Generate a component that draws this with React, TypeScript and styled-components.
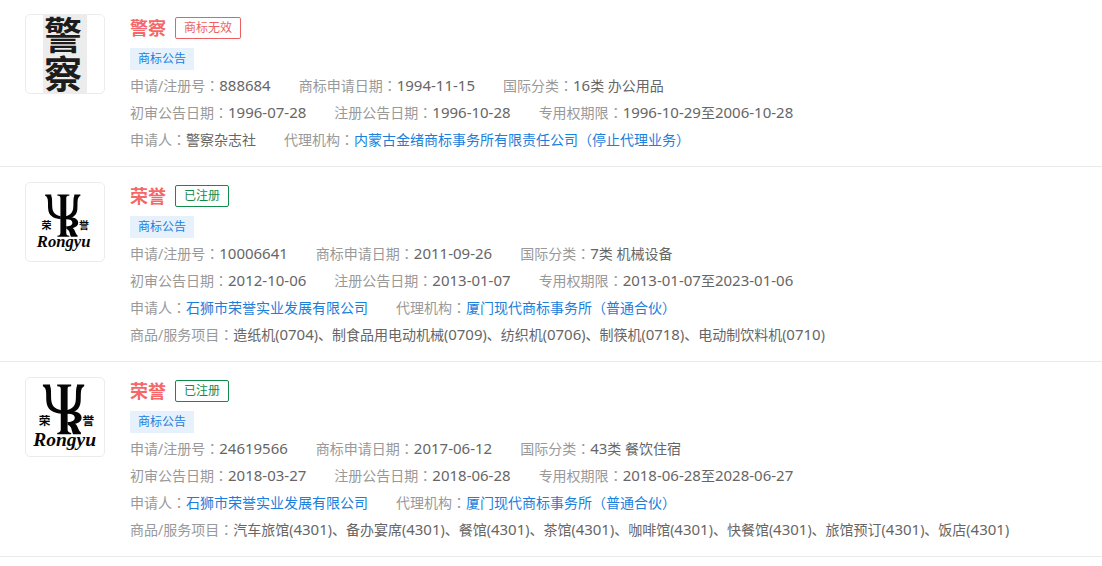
import React from "react";
import styled, { createGlobalStyle } from "styled-components";

const GlobalStyle = createGlobalStyle`
  * { box-sizing: border-box; }
  body {
    margin: 0;
    background: #fff;
    color: #666;
    font-family: "Noto Sans", "Noto Sans CJK SC", sans-serif;
    font-size: 14px;
  }
`;

const List = styled.ul`
  margin: 0;
  padding: 0;
  list-style: none;
`;

const Item = styled.li`
  display: flex;
  align-items: flex-start;
  gap: 25px;
  padding: 15px 25px 13px;
  border-bottom: 1px solid #e9e9e9;
  &:first-child { padding-top: 14px; }
`;

const Thumb = styled.div`
  flex: none;
  width: 80px;
  height: 80px;
  border: 1px solid #ececec;
  border-radius: 5px;
  overflow: hidden;
  svg { display: block; width: 100%; height: 100%; }
`;

const Body = styled.div`
  flex: 1;
  min-width: 0;
`;

const Heading = styled.div`
  display: flex;
  align-items: center;
  gap: 9px;
  height: 28px;
`;

const Name = styled.h2`
  margin: 0;
  font-size: 18px;
  line-height: 28px;
  font-weight: 700;
  color: #f56768;
`;

const Status = styled.span<{ $valid: boolean }>`
  padding: 0 8px;
  border: 1px solid currentColor;
  border-radius: 2px;
  font-size: 12px;
  line-height: 20px;
  color: ${(p) => (p.$valid ? "#128c4a" : "#ee5f62")};
`;

const Tag = styled.div`
  width: fit-content;
  margin: 6px 0 2px;
  padding: 0 8px;
  background: #e6f1fc;
  color: #1a80dc;
  font-size: 12px;
  line-height: 22px;
`;

const Fields = styled.dl`
  margin: 0;
`;

const Row = styled.div`
  display: flex;
  flex-wrap: wrap;
  column-gap: 28px;
`;

const Field = styled.div`
  display: flex;
  line-height: 27px;
`;

const Label = styled.dt`
  flex: none;
  color: #999;
`;

const Value = styled.dd`
  margin: 0;
`;

const Link = styled.a`
  color: #1a80dc;
  text-decoration: none;
  &:hover { text-decoration: underline; }
`;

const Digits = styled.span`
  font-size: 15px;
  line-height: 1;
`;

/* Full-width colons and brackets centred in their cell */
const Centred = styled.span`
  font-family: "Noto Sans CJK TC", sans-serif;
  line-height: 1;
`;

const Text = ({ children }: { children: string }) => (
  <>
    {children.split(/([\d-]+|[（）：])/).map((part, i) => {
      if (/^[\d-]+$/.test(part)) return <Digits key={i}>{part}</Digits>;
      if (/^[（）：]$/.test(part)) return <Centred key={i}>{part}</Centred>;
      return part;
    })}
  </>
);

const PoliceMark = () => (
  <svg viewBox="0 0 78 78" role="img" aria-label="警察">
    <rect x="17" width="44" height="78" fill="#ececec" />
    <g fill="#1c1c1c" fontFamily="Noto Sans CJK SC, sans-serif" fontWeight="700" fontSize="38">
      <text x="18" y="34">警</text>
      <text x="18" y="73">察</text>
    </g>
  </svg>
);

const RongyuMark = ({ large }: { large?: boolean }) => (
  <svg viewBox={large ? "-30 -3 240 240" : "-47 -24 281 281"} role="img" aria-label="荣誉 Rongyu">
    <g fill="#050505">
      {/* Trident arms */}
      <path d="M22 17H44V21C49 33 46 51 48 67C50 82 57 91 78 96V107C51 104 35 94 33 71C31 51 36 27 22 22Z" />
      <path d="M149 17H127V21C122 33 125 51 123 67C121 82 114 91 96 96V107C120 104 136 94 138 71C140 51 135 27 149 22Z" />
      {/* Stem with serifs */}
      <path d="M66 17H109V22C101 22 98 24 98 30V155C98 162 101 165 109 166V170H66V166C74 165 77 162 77 155V30C77 24 74 22 66 22Z" />
      {/* Bowl and leg of the R */}
      <path d="M98 98C126 98 141 106 141 119C141 130 132 135 121 138C130 143 130 158 139 165V170H115C110 160 112 146 98 141V132C113 132 120 127 120 119C120 111 112 107 98 107Z" />
      <g fontFamily="Noto Sans CJK SC, sans-serif" fontWeight="700" fontSize="36">
        <text x="9" y="143">荣</text>
        <text x="144" y="143">誉</text>
      </g>
      <text x="-8" y="207" fontFamily="Liberation Serif, serif" fontStyle="italic" fontWeight="700" fontSize="60">
        Rongyu
      </text>
    </g>
  </svg>
);

type Entry = { label: string; value: string; link?: boolean };
type Trademark = { mark: React.ReactNode; name: string; status: string; valid: boolean; rows: Entry[][] };

const trademarks: Trademark[] = [
  {
    mark: <PoliceMark />,
    name: "警察",
    status: "商标无效",
    valid: false,
    rows: [
      [
        { label: "申请/注册号", value: "888684" },
        { label: "商标申请日期", value: "1994-11-15" },
        { label: "国际分类", value: "16类 办公用品" },
      ],
      [
        { label: "初审公告日期", value: "1996-07-28" },
        { label: "注册公告日期", value: "1996-10-28" },
        { label: "专用权期限", value: "1996-10-29至2006-10-28" },
      ],
      [
        { label: "申请人", value: "警察杂志社" },
        { label: "代理机构", value: "内蒙古金绪商标事务所有限责任公司（停止代理业务）", link: true },
      ],
    ],
  },
  {
    mark: <RongyuMark />,
    name: "荣誉",
    status: "已注册",
    valid: true,
    rows: [
      [
        { label: "申请/注册号", value: "10006641" },
        { label: "商标申请日期", value: "2011-09-26" },
        { label: "国际分类", value: "7类 机械设备" },
      ],
      [
        { label: "初审公告日期", value: "2012-10-06" },
        { label: "注册公告日期", value: "2013-01-07" },
        { label: "专用权期限", value: "2013-01-07至2023-01-06" },
      ],
      [
        { label: "申请人", value: "石狮市荣誉实业发展有限公司", link: true },
        { label: "代理机构", value: "厦门现代商标事务所（普通合伙）", link: true },
      ],
      [
        {
          label: "商品/服务项目",
          value: "造纸机(0704)、制食品用电动机械(0709)、纺织机(0706)、制筷机(0718)、电动制饮料机(0710)",
        },
      ],
    ],
  },
  {
    mark: <RongyuMark large />,
    name: "荣誉",
    status: "已注册",
    valid: true,
    rows: [
      [
        { label: "申请/注册号", value: "24619566" },
        { label: "商标申请日期", value: "2017-06-12" },
        { label: "国际分类", value: "43类 餐饮住宿" },
      ],
      [
        { label: "初审公告日期", value: "2018-03-27" },
        { label: "注册公告日期", value: "2018-06-28" },
        { label: "专用权期限", value: "2018-06-28至2028-06-27" },
      ],
      [
        { label: "申请人", value: "石狮市荣誉实业发展有限公司", link: true },
        { label: "代理机构", value: "厦门现代商标事务所（普通合伙）", link: true },
      ],
      [
        {
          label: "商品/服务项目",
          value:
            "汽车旅馆(4301)、备办宴席(4301)、餐馆(4301)、茶馆(4301)、咖啡馆(4301)、快餐馆(4301)、旅馆预订(4301)、饭店(4301)",
        },
      ],
    ],
  },
];

export default function App() {
  return (
    <>
      <GlobalStyle />
      <List>
        {trademarks.map((item, i) => (
          <Item key={i}>
            <Thumb>{item.mark}</Thumb>
            <Body>
              <Heading>
                <Name>{item.name}</Name>
                <Status $valid={item.valid}>{item.status}</Status>
              </Heading>
              <Tag>商标公告</Tag>
              <Fields>
                {item.rows.map((row, r) => (
                  <Row key={r}>
                    {row.map((entry) => (
                      <Field key={entry.label}>
                        <Label>
                          <Text>{entry.label + "："}</Text>
                        </Label>
                        <Value>
                          {entry.link ? (
                            <Link href="#">
                              <Text>{entry.value}</Text>
                            </Link>
                          ) : (
                            <Text>{entry.value}</Text>
                          )}
                        </Value>
                      </Field>
                    ))}
                  </Row>
                ))}
              </Fields>
            </Body>
          </Item>
        ))}
      </List>
    </>
  );
}
